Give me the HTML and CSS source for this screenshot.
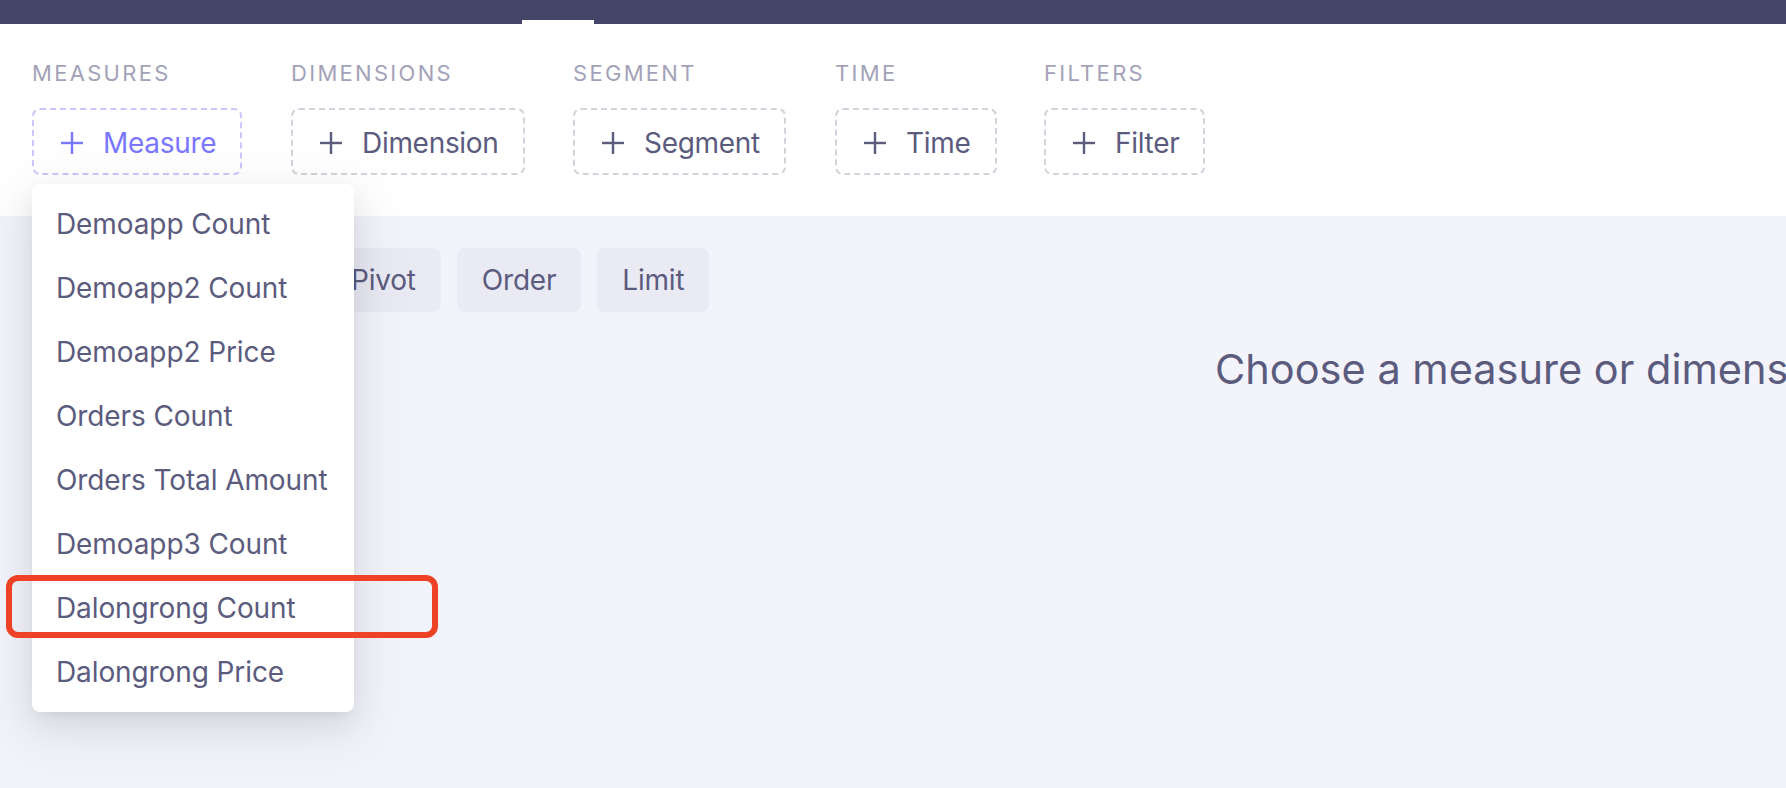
FILE: index.html
```html
<!DOCTYPE html>
<html lang="en">
<head>
<meta charset="utf-8">
<title>Playground</title>
<link rel="stylesheet" href="styles.css">
</head>
<body>
<nav class="topbar">
  <span class="tab-indicator"></span>
</nav>

<header class="query-builder">
  <div class="group">
    <div class="group-label">Measures</div>
    <button class="add-btn add-btn--active">
      <svg class="plus" viewBox="0 0 22 22" aria-hidden="true"><rect x="9.8" y="0" width="2.4" height="22"/><rect x="0" y="9.8" width="22" height="2.4"/></svg>
      <span>Measure</span>
    </button>
  </div>
  <div class="group">
    <div class="group-label">Dimensions</div>
    <button class="add-btn">
      <svg class="plus" viewBox="0 0 22 22" aria-hidden="true"><rect x="9.8" y="0" width="2.4" height="22"/><rect x="0" y="9.8" width="22" height="2.4"/></svg>
      <span>Dimension</span>
    </button>
  </div>
  <div class="group">
    <div class="group-label">Segment</div>
    <button class="add-btn">
      <svg class="plus" viewBox="0 0 22 22" aria-hidden="true"><rect x="9.8" y="0" width="2.4" height="22"/><rect x="0" y="9.8" width="22" height="2.4"/></svg>
      <span>Segment</span>
    </button>
  </div>
  <div class="group">
    <div class="group-label">Time</div>
    <button class="add-btn">
      <svg class="plus" viewBox="0 0 22 22" aria-hidden="true"><rect x="9.8" y="0" width="2.4" height="22"/><rect x="0" y="9.8" width="22" height="2.4"/></svg>
      <span>Time</span>
    </button>
  </div>
  <div class="group">
    <div class="group-label">Filters</div>
    <button class="add-btn">
      <svg class="plus" viewBox="0 0 22 22" aria-hidden="true"><rect x="9.8" y="0" width="2.4" height="22"/><rect x="0" y="9.8" width="22" height="2.4"/></svg>
      <span>Filter</span>
    </button>
  </div>
</header>

<main class="content">
  <div class="settings-row">
    <button class="setting-btn">Pivot</button>
    <button class="setting-btn">Order</button>
    <button class="setting-btn">Limit</button>
  </div>
  <h2 class="empty-message">Choose a measure or dimension to get started</h2>
</main>

<ul class="dropdown">
  <li class="dropdown-item">Demoapp Count</li>
  <li class="dropdown-item">Demoapp2 Count</li>
  <li class="dropdown-item">Demoapp2 Price</li>
  <li class="dropdown-item">Orders Count</li>
  <li class="dropdown-item">Orders Total Amount</li>
  <li class="dropdown-item">Demoapp3 Count</li>
  <li class="dropdown-item">Dalongrong Count</li>
  <li class="dropdown-item">Dalongrong Price</li>
</ul>

<div class="highlight"></div>
</body>
</html>
```

FILE: styles.css
```css
* {
  box-sizing: border-box;
}

html, body {
  margin: 0;
  padding: 0;
}

body {
  width: 1786px;
  height: 788px;
  overflow: hidden;
  background: #f3f3fb;
  font-family: Inter, "Noto Sans", sans-serif;
  color: #5b5b7e;
  position: relative;
}

.topbar {
  height: 24px;
  background: #434668;
  display: flex;
  align-items: flex-end;
  padding-left: 522px;
}

.tab-indicator {
  display: block;
  width: 72px;
  height: 4px;
  background: #ffffff;
}

.query-builder {
  background: #ffffff;
  height: 192px;
  padding: 34px 0 0 32px;
  display: grid;
  grid-template-columns: 259px 282px 262px 209px auto;
  align-items: start;
}

.group {
  display: flex;
  flex-direction: column;
  align-items: flex-start;
}

.group-label {
  font-size: 22px;
  line-height: 30px;
  letter-spacing: 2.3px;
  text-transform: uppercase;
  color: #a3a2b8;
  margin-bottom: 20px;
}

.add-btn {
  display: flex;
  align-items: center;
  height: 67px;
  padding: 3px 24px 0 27px;
  border: 2px dashed #d3d2dd;
  border-radius: 8px;
  background: #ffffff;
  font-family: inherit;
  font-size: 28px;
  letter-spacing: -0.3px;
  color: #5b5b7e;
  gap: 20px;
  cursor: pointer;
}

.add-btn .plus {
  width: 22px;
  height: 22px;
  fill: #5b5b7e;
  flex: none;
}

.add-btn--active {
  border-color: #c9c7fb;
  color: #7a77ff;
}

.add-btn--active .plus {
  fill: #7a77ff;
}

.content {
  padding-top: 32px;
}

.settings-row {
  display: flex;
  gap: 16px;
  padding-left: 326px;
}

.setting-btn {
  height: 64px;
  padding: 0 25px;
  border: none;
  border-radius: 8px;
  background: #eaeaf4;
  font-family: inherit;
  font-size: 28px;
  letter-spacing: -0.2px;
  color: #5b5b7e;
}

.empty-message {
  margin: 33px 0 0;
  padding-left: 1215px;
  font-size: 41.5px;
  line-height: 48px;
  font-weight: 400;
  white-space: nowrap;
  color: #5b5b7e;
}

.dropdown {
  position: absolute;
  left: 32px;
  top: 184px;
  width: 322px;
  margin: 0;
  padding: 8px 0;
  list-style: none;
  background: #ffffff;
  border-radius: 8px;
  box-shadow: 0 6px 12px -8px rgba(0, 0, 0, 0.12),
              0 12px 32px 0 rgba(0, 0, 0, 0.08),
              0 18px 56px 16px rgba(0, 0, 0, 0.05);
}

.dropdown-item {
  height: 64px;
  line-height: 64px;
  padding: 0 24px;
  font-size: 28px;
  letter-spacing: -0.1px;
  color: #5b5b7e;
  white-space: nowrap;
}

.highlight {
  position: absolute;
  left: 6px;
  top: 575px;
  width: 432px;
  height: 63px;
  border: 6px solid #ee4125;
  border-radius: 12px;
}
```
